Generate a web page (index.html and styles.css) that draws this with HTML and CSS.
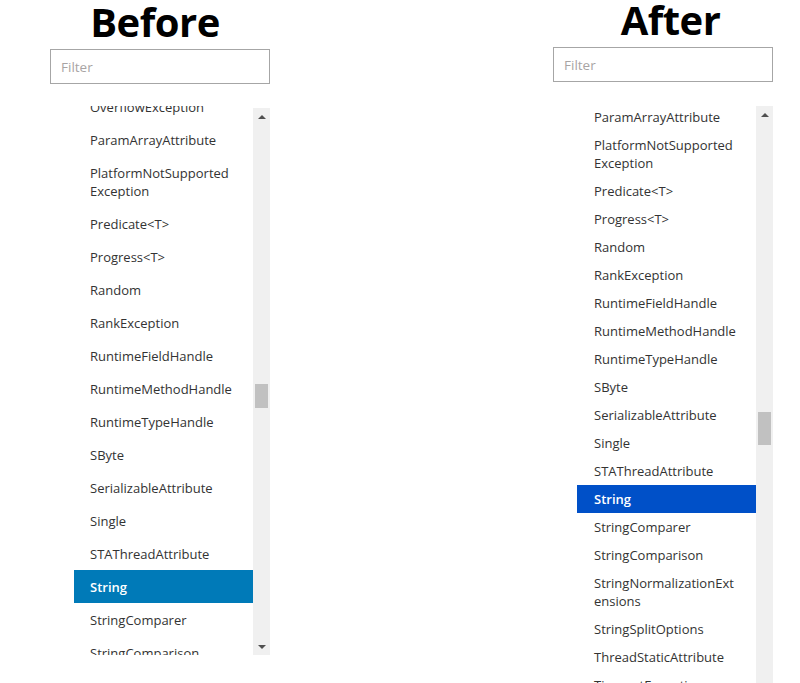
FILE: index.html
```html
<!DOCTYPE html>
<html lang="en">
<head>
<meta charset="utf-8">
<title>Before / After</title>
<link rel="stylesheet" href="styles.css">
</head>
<body>
<div class="page">
  <section class="panel panel-before">
    <h1 class="title">Before</h1>
    <input class="filter" type="text" placeholder="Filter">
    <div class="listbox">
      <div class="viewport">
        <ul class="items">
          <li>OverflowException</li>
          <li>ParamArrayAttribute</li>
          <li>PlatformNotSupported<br>Exception</li>
          <li>Predicate&lt;T&gt;</li>
          <li>Progress&lt;T&gt;</li>
          <li>Random</li>
          <li>RankException</li>
          <li>RuntimeFieldHandle</li>
          <li>RuntimeMethodHandle</li>
          <li>RuntimeTypeHandle</li>
          <li>SByte</li>
          <li>SerializableAttribute</li>
          <li>Single</li>
          <li>STAThreadAttribute</li>
          <li class="selected">String</li>
          <li>StringComparer</li>
          <li>StringComparison</li>
          <li>StringNormalizationExtensions</li>
        </ul>
      </div>
      <div class="scrollbar">
        <span class="arrow arrow-up"></span>
        <div class="track"><div class="thumb"></div></div>
        <span class="arrow arrow-down"></span>
      </div>
    </div>
  </section>

  <section class="panel panel-after">
    <h1 class="title">After</h1>
    <input class="filter" type="text" placeholder="Filter">
    <div class="listbox">
      <div class="viewport">
        <ul class="items">
          <li>ParamArrayAttribute</li>
          <li>PlatformNotSupported<br>Exception</li>
          <li>Predicate&lt;T&gt;</li>
          <li>Progress&lt;T&gt;</li>
          <li>Random</li>
          <li>RankException</li>
          <li>RuntimeFieldHandle</li>
          <li>RuntimeMethodHandle</li>
          <li>RuntimeTypeHandle</li>
          <li>SByte</li>
          <li>SerializableAttribute</li>
          <li>Single</li>
          <li>STAThreadAttribute</li>
          <li class="selected">String</li>
          <li>StringComparer</li>
          <li>StringComparison</li>
          <li>StringNormalizationExt<br>ensions</li>
          <li>StringSplitOptions</li>
          <li>ThreadStaticAttribute</li>
          <li>TimeoutException</li>
          <li>TimeSpan</li>
        </ul>
      </div>
      <div class="scrollbar">
        <span class="arrow arrow-up"></span>
        <div class="track"><div class="thumb"></div></div>
      </div>
    </div>
  </section>
</div>
</body>
</html>
```
FILE: styles.css
```css
html, body {
  margin: 0;
  padding: 0;
  background: #ffffff;
  overflow: hidden;
  height: 683px;
}

.page {
  display: flex;
  align-items: flex-start;
  font-family: "Open Sans", "Noto Sans", sans-serif;
  color: #333333;
}

.panel {
  width: 220px;
  display: flex;
  flex-direction: column;
}

.panel-before {
  margin-left: 50px;
}

.panel-after {
  margin-left: 283px;
}

.title {
  margin: 0;
  font-family: "Open Sans", sans-serif;
  font-weight: 700;
  font-size: 40px;
  line-height: 44px;
  height: 44px;
  color: #000000;
  text-align: center;
  letter-spacing: -0.5px;
}

.panel-before .title {
  padding-right: 10px;
}

.panel-after .title {
  padding-left: 15px;
  margin-top: -2px;
  margin-bottom: 2px;
}

.filter {
  box-sizing: border-box;
  width: 220px;
  height: 35px;
  margin: 5px 0 0 0;
  padding: 1px 10px 0 10px;
  border: 1px solid #a6a6a6;
  border-radius: 0;
  font-family: "Open Sans", sans-serif;
  font-size: 13.5px;
  color: #333333;
  outline: none;
}

.filter::placeholder {
  color: #a8a4a4;
}

.panel-after .filter {
  margin-top: 3px;
}

.listbox {
  display: flex;
  margin-left: 24px;
  width: 196px;
}

.panel-before .listbox {
  margin-top: 22px;
  height: 549px;
}

.panel-after .listbox {
  margin-top: 21px;
  height: 620px;
}

.viewport {
  flex: 1;
  overflow: hidden;
}

.items {
  list-style: none;
  margin: 0;
  padding: 0;
}

.items li {
  padding-left: 16px;
  padding-right: 4px;
  font-size: 13px;
  line-height: 18px;
  color: #333333;
}

.panel-before .items {
  margin-top: -16px;
}

.panel-before .items li {
  padding-top: 7.5px;
  padding-bottom: 7.5px;
}

.panel-after .items li {
  padding-top: 5px;
  padding-bottom: 5px;
  padding-left: 17px;
}

.items li.selected {
  color: #ffffff;
  font-weight: 600;
}

.panel-before .items li.selected {
  background: #007ab8;
}

.panel-after .items li.selected {
  background: #0050c8;
}

.scrollbar {
  width: 17px;
  margin-top: 2px;
  background: #f0f0f0;
  display: flex;
  flex-direction: column;
}

.panel-after .scrollbar {
  margin-top: 3px;
}

.arrow {
  height: 17px;
  flex: none;
  display: flex;
  align-items: center;
  justify-content: center;
}

.arrow::before {
  content: "";
  width: 0;
  height: 0;
  border-left: 4px solid transparent;
  border-right: 4px solid transparent;
}

.arrow-up::before {
  border-bottom: 4px solid #505050;
}

.arrow-down::before {
  border-top: 4px solid #505050;
}

.track {
  flex: 1;
}

.thumb {
  margin-left: 2px;
  width: 13px;
  background: #c1c1c1;
}

.panel-before .thumb {
  margin-top: 259px;
  height: 24px;
}

.panel-after .thumb {
  margin-top: 289px;
  height: 33px;
}
```
